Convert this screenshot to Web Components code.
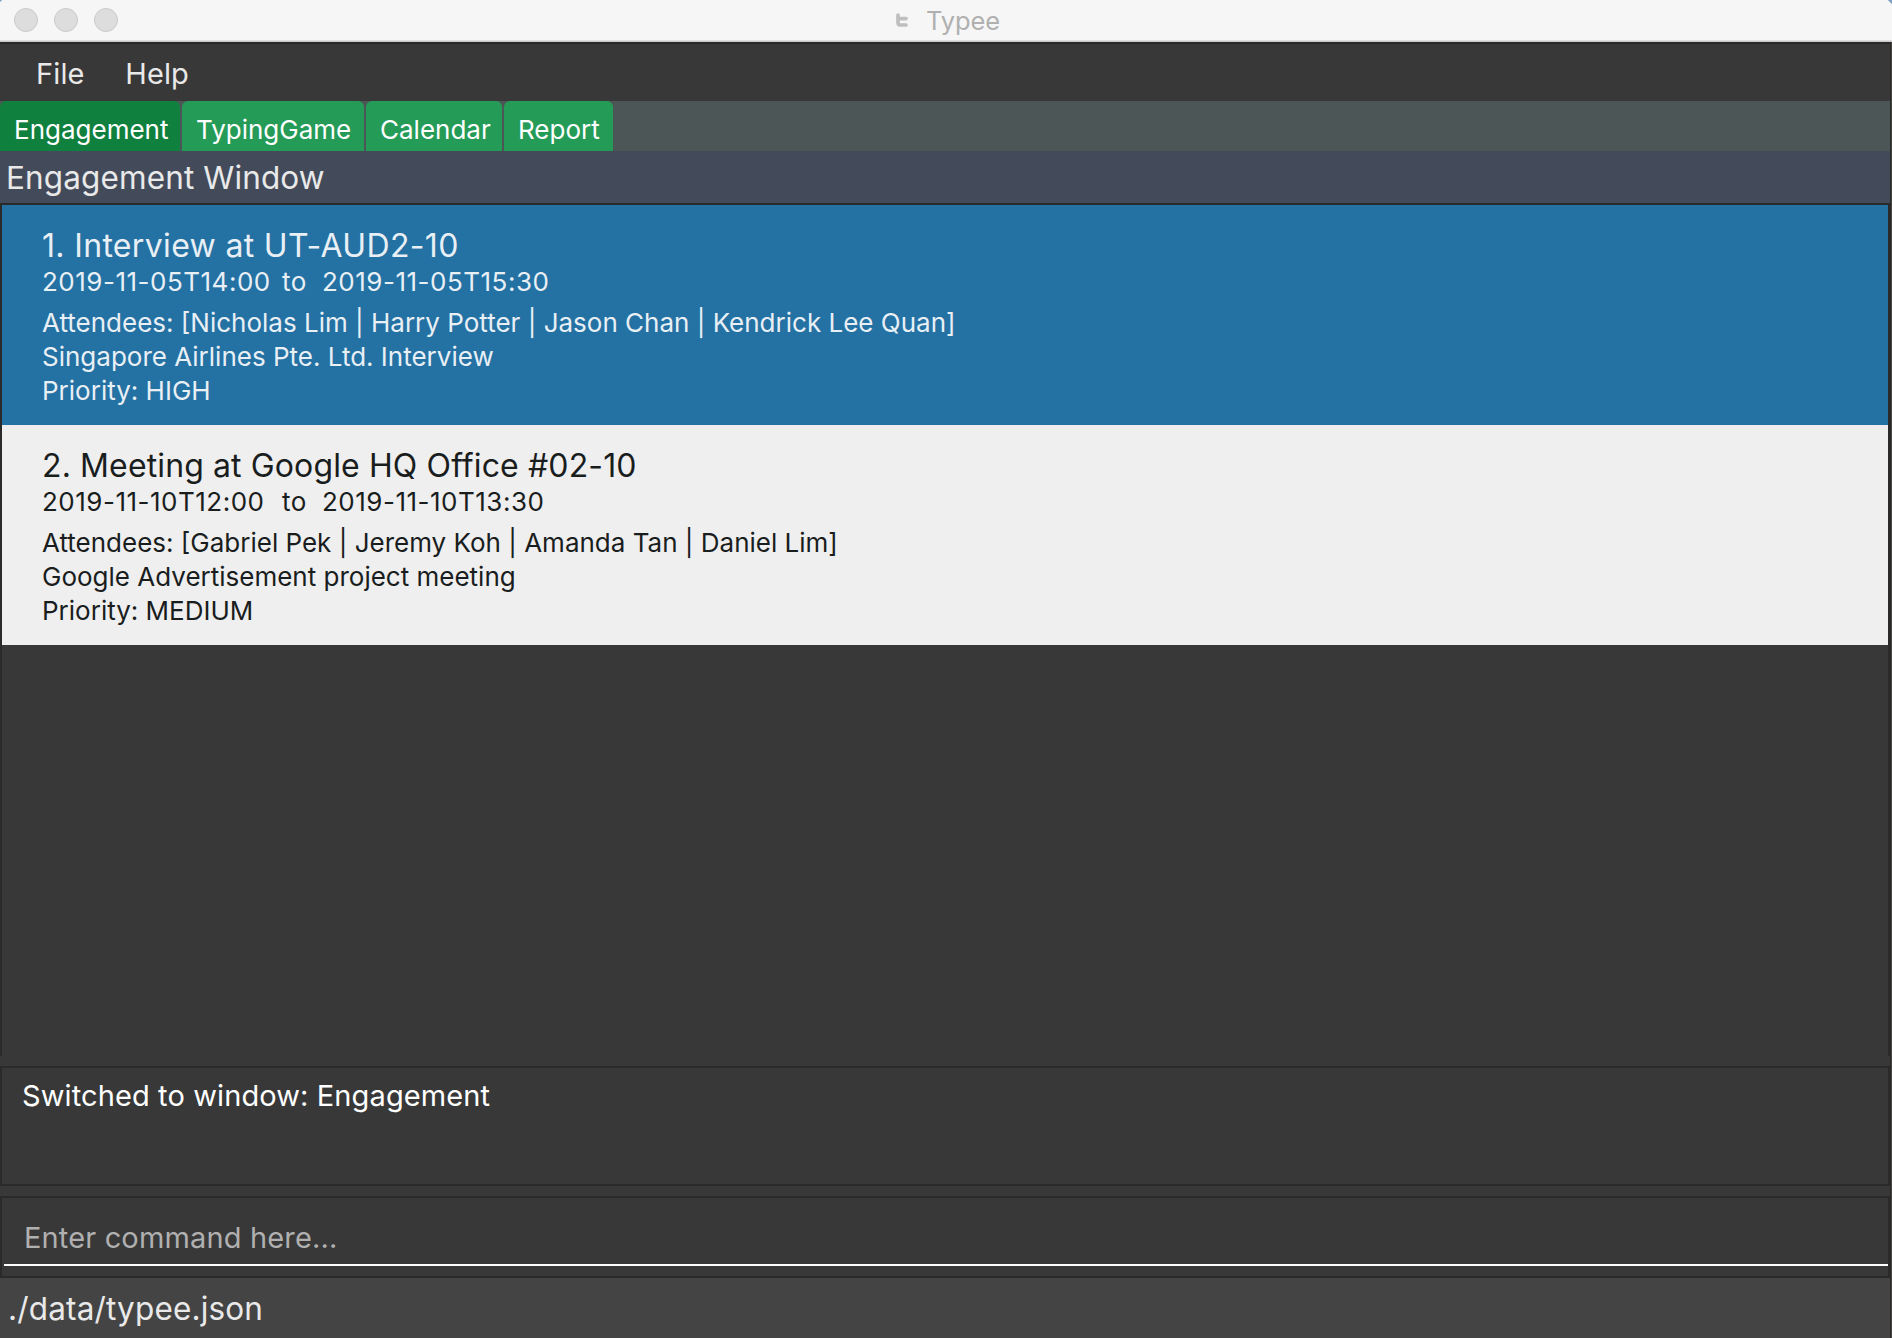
<!DOCTYPE html>
<html lang="en">
<head>
<meta charset="utf-8">
<title>Typee</title>
<style>
html,body{margin:0;height:100%;overflow:hidden}
body{background:#383838;font-family:Inter,"Liberation Sans",sans-serif;color:#e9e9e9}
</style>
</head>
<body>
<typee-app></typee-app>
<script>
const define=(name,markup,setup)=>customElements.define(name,class extends HTMLElement{
  connectedCallback(){
    if(this.shadowRoot)return;
    const t=document.createElement('template');
    t.innerHTML=markup;
    this.attachShadow({mode:'open'}).append(t.content.cloneNode(true));
    if(setup)setup(this,this.shadowRoot);
  }
});

define('title-bar',`<style>
:host{display:flex;align-items:flex-start;box-sizing:border-box;height:42px;background:linear-gradient(225deg,#7f9fc4 0 2.5px,transparent 3.5px),linear-gradient(135deg,#7f9fc4 0 1px,transparent 2px),linear-gradient(#f6f6f6 0 40px,#dedede 40px 41px,#cbcbcb 41px);color:#b0b0b0}
.lights{display:flex;gap:16px;padding:8px 0 0 14px;width:882px;box-sizing:border-box}
i{box-sizing:border-box;width:24px;height:24px;border-radius:50%;background:#dddddd;border:1px solid #cacaca}
svg{display:block;margin-top:12px;width:14px;height:16px;flex:none;margin-left:13px}
span{margin-left:17px;font-size:25.5px;line-height:41px;letter-spacing:-.1px}
</style>
<div class="lights"><i></i><i></i><i></i></div>
<svg viewBox="0 0 14 16" fill="none" stroke="#bfbfbf" stroke-linecap="round" stroke-linejoin="round"><path d="M3 3V10.4Q3 13 5.6 13H11M3 6.6H11" stroke-width="3.7"/></svg>
<span><slot></slot></span>`);

define('menu-bar',`<style>
:host{display:flex;box-sizing:border-box;height:59px;border-top:2px solid #2a2a2a;padding:1px 0 0 36px;gap:40.5px;font-size:29px;line-height:57px;letter-spacing:.15px}
</style><slot></slot>`);

define('tab-strip',`<style>
:host{display:flex;gap:2px;height:50px;background:#4d5656}
</style><slot></slot>`);

define('tab-item',`<style>
:host{display:block;box-sizing:border-box;height:50px;padding:4px 0 0 14px;border-radius:6px 6px 0 0;background:#249b57;color:#fff;font-size:26px;line-height:49px;white-space:nowrap}
:host([selected]){background:#10803f}
</style><slot></slot>`,(el)=>{el.style.width=el.getAttribute('width')+'px'});

define('window-heading',`<style>
:host{display:block;box-sizing:border-box;height:52px;padding:1px 0 0 6px;background:#434b5b;font-size:31.5px;line-height:52px;letter-spacing:.12px}
</style><slot></slot>`);

define('engagement-list',`<style>
:host{display:block;box-sizing:border-box;height:853px;border:2px solid #2a2a2a;border-bottom:0}
</style><slot></slot>`);

define('engagement-card',`<style>
:host{display:block;box-sizing:border-box;height:220px;padding:23px 0 0 40px;background:#efefef;color:#1a1d1d;font-size:26px;line-height:34px;white-space:nowrap}
:host([selected]){background:#2471a3;color:#e8eff5}
.title{font-size:32px;line-height:36px;margin-bottom:1px;letter-spacing:var(--title-ls)}
.time{display:flex;margin-bottom:7px;letter-spacing:.5px}
.from{width:240px}.to{width:40px;letter-spacing:.5px}
</style>
<div class="title"><slot name="title"></slot></div>
<div class="time"><div class="from"><slot name="from"></slot></div><div class="to">to</div><slot name="until"></slot></div>
<div><slot name="attendees"></slot></div>
<div><slot name="description"></slot></div>
<div><slot name="priority"></slot></div>`);

define('result-box',`<style>
:host{display:block;box-sizing:border-box;height:120px;margin-top:10px;border:2px solid #2a2a2a;padding:8px 0 0 20px;color:#fff;font-size:29px;line-height:40px;letter-spacing:.11px}
</style><slot></slot>`);

define('command-box',`<style>
:host{display:block;box-sizing:border-box;height:82px;margin-top:10px;border:2px solid #2a2a2a}
div{box-sizing:border-box;height:68px;margin-left:2px;padding:7px 0 0 20px;border-bottom:2px solid #fff;color:#b0b0b0;font-size:29px;line-height:65px;letter-spacing:.15px;overflow:hidden}
</style><div><slot></slot></div>`);

define('status-footer',`<style>
:host{display:block;box-sizing:border-box;height:60px;padding:1px 0 0 8px;background:#444;font-size:31.5px;line-height:60px;letter-spacing:.16px}
</style><slot></slot>`);

define('typee-app',`<style>
:host{display:block;width:1892px;height:1338px;background:#383838}
main{box-sizing:border-box;height:1296px;border-right:1px solid #45443f}
section{box-sizing:border-box;height:1296px;border-right:1px solid #2a2a2a;overflow:hidden}
</style>
<title-bar>Typee</title-bar>
<main><section>
<menu-bar><span>File</span><span>Help</span></menu-bar>
<tab-strip>
<tab-item selected width="180">Engagement</tab-item>
<tab-item width="182">TypingGame</tab-item>
<tab-item width="136">Calendar</tab-item>
<tab-item width="109">Report</tab-item>
</tab-strip>
<window-heading>Engagement Window</window-heading>
<engagement-list>
<engagement-card selected style="--title-ls:.33px">
<span slot="title">1. Interview at UT-AUD2-10</span>
<span slot="from">2019-11-05T14:00</span><span slot="until">2019-11-05T15:30</span>
<span slot="attendees">Attendees: [Nicholas Lim | Harry Potter | Jason Chan | Kendrick Lee Quan]</span>
<span slot="description">Singapore Airlines Pte. Ltd. Interview</span>
<span slot="priority">Priority: HIGH</span>
</engagement-card>
<engagement-card style="--title-ls:.12px">
<span slot="title">2. Meeting at Google HQ Office #02-10</span>
<span slot="from">2019-11-10T12:00</span><span slot="until">2019-11-10T13:30</span>
<span slot="attendees">Attendees: [Gabriel Pek | Jeremy Koh | Amanda Tan | Daniel Lim]</span>
<span slot="description">Google Advertisement project meeting</span>
<span slot="priority">Priority: MEDIUM</span>
</engagement-card>
</engagement-list>
<result-box>Switched to window: Engagement</result-box>
<command-box>Enter command here...</command-box>
<status-footer>./data/typee.json</status-footer>
</section></main>`);
</script>
</body>
</html>
